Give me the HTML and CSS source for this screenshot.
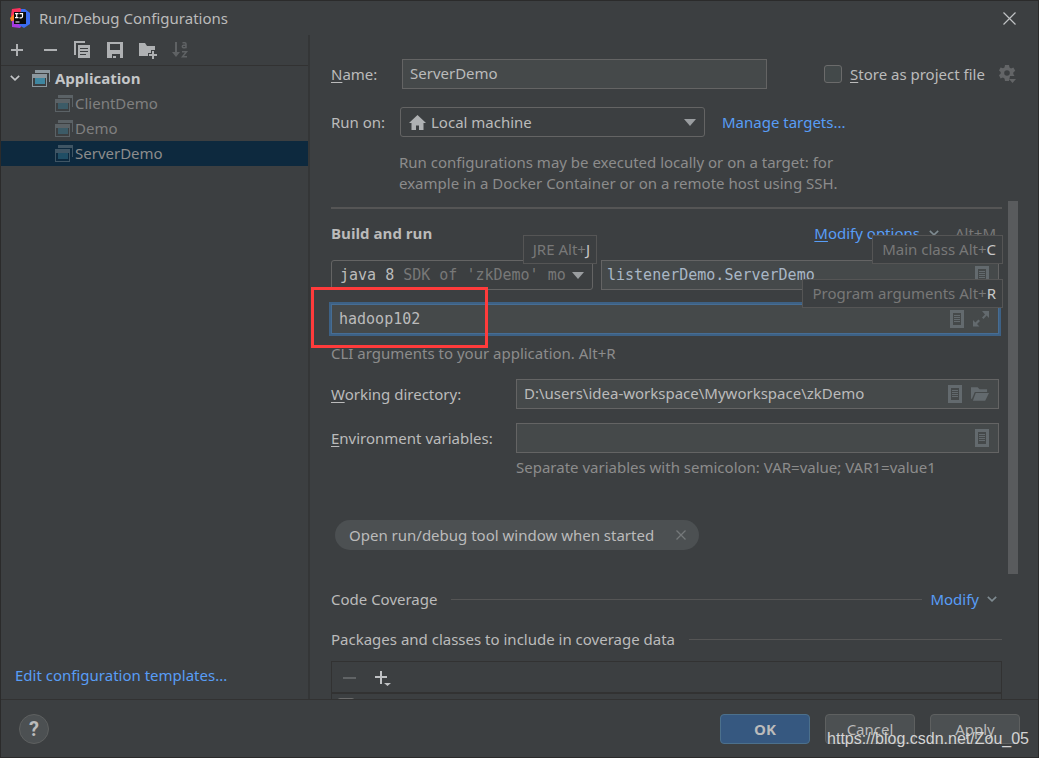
FILE: index.html
```html
<!DOCTYPE html>
<html lang="en">
<head>
<meta charset="utf-8">
<title>Run/Debug Configurations</title>
<link rel="stylesheet" href="styles.css">
</head>
<body>
<svg class="sprite" aria-hidden="true">
  <symbol id="app" viewBox="0 0 18 17">
    <path fill="#8b979e" d="M3 0h15v12h-1V3H3z"/>
    <path fill="#8b979e" fill-rule="evenodd" d="M0 4h15v13H0zM1 8v8h13V8z"/>
    <path fill="#3e86a0" d="M3 8h10v6H3z"/>
  </symbol>
  <symbol id="doc" viewBox="0 0 14 18">
    <path fill="currentColor" fill-rule="evenodd" d="M0 0h14v18H0zM3 3v12h8V3z"/>
    <path fill="currentColor" d="M4 5h6v1H4zM4 7h6v1H4zM4 9h6v1H4zM4 11h6v1H4z"/>
  </symbol>
  <symbol id="chev" viewBox="0 0 10 6">
    <path fill="none" stroke="currentColor" stroke-width="1.6" d="M.8.8 5 4.8 9.2.8"/>
  </symbol>
  <symbol id="tri" viewBox="0 0 12 7"><path fill="currentColor" d="M0 0h12L6 7z"/></symbol>
</svg>

<div class="dialog">
  <header class="titlebar">
    <svg class="logo" viewBox="0 0 20 20" aria-hidden="true">
      <path fill="#fc315d" d="M2 1 10 0l4 4-4 8-8 1-1-6z"/>
      <path fill="#fd8224" d="M0 10 4 6v8l-3-1z"/>
      <path fill="#a73ae0" d="M2 13l4-1 6 5-2 3-8-1z"/>
      <path fill="#3b6cf0" d="M11 1l4 0 5 4v11l-6 4-5-3z"/>
      <path fill="#0a0a0a" d="M4 4h12v12H4z"/>
      <path fill="none" stroke="#fff" stroke-width="1.2" d="M5 5.6h3.500M6.700 5.600v4M5 9.600h3.500M9.500 5.600h3v3q0 1.200-1.300 1.200H9.500"/>
      <path fill="#fff" d="M5.500 13.500h4v1h-4z"/>
    </svg>
    <h1 class="title">Run/Debug Configurations</h1>
    <button class="icon-btn close" aria-label="Close">
      <svg width="13" height="13" viewBox="0 0 13 13"><path fill="none" stroke="#c0c2c4" stroke-width="1.200" d="M.5.5l12 12M12.500.5l-12 12"/></svg>
    </button>
  </header>

  <div class="body">
    <aside class="sidebar">
      <div class="toolbar">
        <button class="icon-btn" aria-label="Add"><svg width="18" height="18" viewBox="0 0 18 18"><path fill="#afb1b3" d="M9 3h2v5h5v2h-5v5H9v-5H4V8h5z"/></svg></button>
        <button class="icon-btn" aria-label="Remove"><svg width="18" height="18" viewBox="0 0 18 18"><path fill="#afb1b3" d="M4 8h13v2H4z"/></svg></button>
        <button class="icon-btn" aria-label="Copy"><svg width="18" height="18" viewBox="0 0 18 18"><path fill="#afb1b3" d="M1 0h11v2H3v12H1z"/><path fill="#afb1b3" fill-rule="evenodd" d="M5 4h12v13H5zM7 7v1h8V7zM7 10v1h8v-1zM7 13v1h6v-1z"/></svg></button>
        <button class="icon-btn" aria-label="Save"><svg width="18" height="18" viewBox="0 0 18 18"><path fill="#afb1b3" fill-rule="evenodd" d="M1 1h16v16h-3v-4H6v4H1zM4 3v6h10V3z"/><path fill="#afb1b3" d="M7 15h3v2H7z"/></svg></button>
        <button class="icon-btn" aria-label="New folder"><svg width="18" height="18" viewBox="0 0 18 18"><path fill="#afb1b3" d="M0 2h6l2 3h8v4h-4v3H9v3H0z"/><path fill="#afb1b3" d="M13 10h2v3h3v2h-3v3h-2v-3h-3v-2h3z"/></svg></button>
        <button class="icon-btn" aria-label="Sort" disabled><svg width="18" height="18" viewBox="0 0 18 18"><path fill="#5f6264" d="M3 1h2v10h3l-4 5-4-5h3z"/><path fill="none" stroke="#5f6264" stroke-width="1.500" d="M10.500 1.700h2.300q1.200 0 1.200 1.200v4.400M14 4.200h-2.500q-1.200 0-1.200 1.200t1.200 1.300h1.500l1-1M10 10.700h4.500l-4 5H15"/></svg></button>
      </div>
      <ul class="tree">
        <li class="node root"><svg class="twisty"><use href="#chev"/></svg><svg class="app-ico"><use href="#app"/></svg>Application</li>
        <li class="node leaf"><svg class="app-ico"><use href="#app"/></svg>ClientDemo</li>
        <li class="node leaf"><svg class="app-ico"><use href="#app"/></svg>Demo</li>
        <li class="node leaf selected"><svg class="app-ico"><use href="#app"/></svg>ServerDemo</li>
      </ul>
      <a class="link templates" href="#templates">Edit configuration templates...</a>
    </aside>

    <main class="main">
      <section class="head">
        <div class="row name-row">
          <label class="label" for="name"><u>N</u>ame:</label>
          <input class="field name-field" id="name" type="text" value="ServerDemo">
          <div class="store">
            <input class="check" type="checkbox" id="store">
            <label for="store"><u>S</u>tore as project file</label>
            <button class="icon-btn" aria-label="Storage settings"><svg width="17" height="18" viewBox="0 0 17 18"><path fill="#636567" fill-rule="evenodd" d="M6 0h4l.5 2.500 1.500.9 2.400-.9 1.800 3.200-1.900 1.700v1.700L15.500 11H11l-1 5H6l-.5-2.500-1.600-.9-2.300.9L0 10.200l1.700-1.600V7L0 5.600l1.600-3.200 2.400.9 1.500-.9zM8 5.200a2.800 2.800 0 1 0 0 5.600 2.800 2.800 0 0 0 0-5.600z"/><path fill="#636567" d="M10 14h7l-3.500 4z"/></svg></button>
          </div>
        </div>
        <div class="row target-row">
          <label class="label" for="target">Run on:</label>
          <div class="combo target-combo">
            <svg class="home" viewBox="0 0 17 15"><path fill="#afb1b3" d="M8.500 0 17 8h-2.500v7H10v-4.500H7V15H2.500V8H0z"/></svg>
            <select id="target"><option>Local machine</option></select>
            <svg class="tri"><use href="#tri"/></svg>
          </div>
          <a class="link" href="#targets">Manage targets...</a>
        </div>
        <p class="hint target-hint">Run configurations may be executed locally or on a target: for<br>example in a Docker Container or on a remote host using SSH.</p>
      </section>

      <div class="scroller">
        <div class="form">
          <div class="build-head">
            <h2 class="section-title">Build and run</h2>
            <a class="link modify-options" href="#options"><u>M</u>odify options</a>
            <svg class="chev"><use href="#chev"/></svg>
            <span class="shortcut">Alt+M</span>
          </div>
          <div class="build-row">
            <div class="combo jre mono">
              <label for="jre">java 8</label>
              <select id="jre"><option>SDK of 'zkDemo' mo</option></select>
              <svg class="tri"><use href="#tri"/></svg>
              <span class="tip">JRE Alt+<b>J</b></span>
            </div>
            <div class="field main-class mono">
              <input type="text" aria-label="Main class" value="listenerDemo.ServerDemo">
              <button class="icon-btn dim" aria-label="Browse classes"><svg class="doc"><use href="#doc"/></svg></button>
              <span class="tip">Main class Alt+<b>C</b></span>
            </div>
          </div>
          <div class="field args mono">
            <input type="text" aria-label="Program arguments" value="hadoop102">
            <button class="icon-btn dim" aria-label="Insert macro"><svg class="doc"><use href="#doc"/></svg></button>
            <button class="icon-btn dim" aria-label="Expand"><svg width="16" height="16" viewBox="0 0 16 16"><path fill="currentColor" d="M9 0h7v7l-2.400-2.400L10.500 8 9 6.500l3-3zM0 9l2.400 2.400L5.500 8.500 7 10l-3 3 2.500 2.500H0z"/></svg></button>
            <span class="tip">Program arguments Alt+<b>R</b></span>
            <span class="marker"></span>
          </div>
          <p class="hint args-hint">CLI arguments to your application. Alt+R</p>

          <div class="grid">
            <label for="wd"><u>W</u>orking directory:</label>
            <div class="field">
              <input id="wd" type="text" value="D:\users\idea-workspace\Myworkspace\zkDemo">
              <button class="icon-btn dim" aria-label="Insert macro"><svg class="doc"><use href="#doc"/></svg></button>
              <button class="icon-btn dim" aria-label="Browse"><svg width="18" height="14" viewBox="0 0 19 14"><path fill="currentColor" d="M0 0h7l2 2h8v3H4L1 12H0z"/><path fill="currentColor" d="M5 6h14l-4 8H2z"/></svg></button>
            </div>
            <label for="env"><u>E</u>nvironment variables:</label>
            <div class="field">
              <input id="env" type="text">
              <button class="icon-btn dim" aria-label="Edit variables"><svg class="doc"><use href="#doc"/></svg></button>
            </div>
          </div>
          <p class="hint env-hint">Separate variables with semicolon: VAR=value; VAR1=value1</p>

          <div class="chip">Open run/debug tool window when started
            <button class="icon-btn" aria-label="Remove option"><svg width="10" height="10" viewBox="0 0 10 10"><path stroke="#75787a" stroke-width="1.300" d="M.5.5l9 9M9.500.5l-9 9"/></svg></button>
          </div>

          <div class="divider coverage"><span>Code Coverage</span><i class="rule"></i><a class="link" href="#modify">Modify</a><svg class="chev"><use href="#chev"/></svg></div>
          <div class="divider packages"><span>Packages and classes to include in coverage data</span><i class="rule"></i></div>
          <div class="table-box">
            <div class="table-tools">
              <button class="icon-btn" aria-label="Remove package" disabled><svg width="14" height="18" viewBox="0 0 14 18"><path fill="#606365" d="M0 9h13v2H0z"/></svg></button>
              <button class="icon-btn" aria-label="Add package"><svg width="18" height="18" viewBox="0 0 18 18"><path fill="#c0c2c4" d="M6 3h2v5h5v2H8v6H6v-6H1V8h5zM10 15h7l-3.500 3z"/></svg></button>
            </div>
            <div class="table-row"><input class="check" type="checkbox" aria-label="Include package"></div>
          </div>
        </div>
        <div class="scrollbar"><div class="thumb"></div></div>
      </div>
    </main>
  </div>

  <footer class="footer">
    <button class="help" aria-label="Help">?</button>
    <button class="btn primary">OK</button>
    <button class="btn">Cancel</button>
    <button class="btn">Apply</button>
    <span class="watermark">https://blog.csdn.net/Zou_05</span>
  </footer>
</div>
</body>
</html>
```
FILE: styles.css
```css
* { box-sizing: border-box; }
body {
  margin: 0;
  background: #3c3f41;
  color: #bbbbbb;
  font: 15px/20px "Noto Sans", "Open Sans", sans-serif;
}
h1, h2, p, ul { margin: 0; padding: 0; }
button, input, select { font: inherit; color: inherit; }
u { text-decoration: underline; text-underline-offset: 2px; }
svg { display: block; flex: none; }
.sprite { display: none; }

.dialog {
  display: flex;
  flex-direction: column;
  height: 100vh;
  border: 1px solid #2b2b2b;
  overflow: hidden;
}
.icon-btn {
  display: flex;
  flex: none;
  padding: 0;
  border: 0;
  background: none;
}
.dim { color: #636a6e; }
.link { color: #589df6; text-decoration: none; white-space: nowrap; }
.hint { color: #8c8c8c; }
.mono { font-family: "DejaVu Sans Mono", monospace; }

.titlebar {
  display: flex;
  align-items: center;
  height: 34px;
  padding: 0 22px 0 9px;
}
.logo { width: 20px; height: 20px; }
.title { margin-left: 9px; font-size: 15px; font-weight: 400; }
.close { margin-left: auto; }

.body { display: flex; flex: 1; min-height: 0; }
.sidebar {
  display: flex;
  flex-direction: column;
  flex: 0 0 309px;
  border-right: 2px solid #343637;
}
.toolbar {
  display: flex;
  align-items: center;
  gap: 15px;
  height: 31px;
  padding-left: 6px;
  border-bottom: 1px solid #323232;
}
.tree { list-style: none; }
.node { display: flex; align-items: center; height: 25px; padding-bottom: 1px; }
.root { padding-left: 9px; color: #c4c6c8; font-family: "Open Sans", sans-serif; font-weight: 700; }
.leaf { padding-left: 54px; color: #808080; }
.selected { background: #0d293e; color: #8c8c8c; }
.twisty { width: 10px; height: 6px; margin-right: 12px; }
.app-ico { width: 18px; height: 17px; }
.root .app-ico { margin-right: 5px; }
.leaf .app-ico { margin-right: 2px; opacity: .4; }
.templates { margin: auto auto 14px 14px; }

.main { display: flex; flex-direction: column; flex: 1; min-width: 0; }
.head { padding: 24px 22px 7px 21px; }
.row { display: flex; align-items: center; }
.label { flex: none; width: 69px; }
.name-row .label { width: 71px; }
.field {
  position: relative;
  display: flex;
  align-items: center;
  gap: 9px;
  height: 30px;
  padding: 0 9px 0 7px;
  border: 1px solid #646464;
  background: #45494a;
}
.field input {
  flex: 1;
  min-width: 0;
  padding: 0;
  border: 0;
  outline: 0;
  background: none;
}
.name-field { flex: 1; min-width: 0; padding-bottom: 2px; outline: 0; }
.grid .field input { padding-bottom: 2px; }
.store {
  display: flex;
  flex: 0 0 192px;
  align-items: center;
  margin-left: 57px;
  white-space: nowrap;
}
.store label { flex: 1; margin-left: 8px; }
.check {
  appearance: none;
  width: 18px;
  height: 18px;
  margin: 0;
  border: 1px solid #6b6b6b;
  border-radius: 3px;
  background: #43494a;
}
.combo {
  position: relative;
  display: flex;
  align-items: center;
  height: 30px;
  padding: 0 8px;
  border: 1px solid #646464;
  border-radius: 3px;
}
.combo select {
  appearance: none;
  flex: 1;
  min-width: 0;
  padding: 0;
  border: 0;
  outline: 0;
  background: none;
}
.tri { width: 12px; height: 7px; color: #9a9da0; }
.doc { width: 14px; height: 18px; }
.home { width: 17px; height: 15px; margin-right: 5px; }
.target-row { margin-top: 18px; }
.target-combo { flex: 0 0 305px; margin-right: 17px; }
.target-hint { margin: 15px 0 0 68px; line-height: 21px; }

.scroller { display: flex; flex: 1; min-height: 0; overflow: hidden; }
.form { flex: 1; min-width: 0; margin: 6px 6px 0 21px; border-top: 2px solid #555555; height: max-content; }
.scrollbar { width: 30px; }
.thumb { width: 10px; height: 373px; background: #595b5d; }

.build-head { display: flex; align-items: center; padding: 14px 6px 0 0; }
.section-title { margin-right: auto; font: 700 15px/20px "Open Sans", sans-serif; }
.chev { width: 10px; height: 6px; margin-left: 5px; color: #7f8b91; }
.modify-options { margin-right: 4px; }
.shortcut { margin-left: 16px; color: #787878; }
.build-row { display: flex; gap: 8px; margin: 17px 3px 0 0; }
.jre { flex: 0 0 262px; }
.jre label { margin-right: 9px; }
.jre select { color: #787878; }
.main-class { flex: 1; min-width: 0; padding-left: 5px; color: #a9b7c6; }
.tip {
  position: absolute;
  z-index: 1;
  top: -26px;
  right: -5px;
  height: 29px;
  padding: 0 6px 0 9px;
  border: 1px solid #555555;
  background: #3c3f41;
  color: #787878;
  font: 15px/27px "Noto Sans", "Open Sans", sans-serif;
  white-space: nowrap;
}
.tip b { color: #c8c8c8; font-weight: 400; }
.args {
  margin: 14px 3px 0 0;
  border-color: #466d94;
  box-shadow: 0 0 0 2px #3d6185;
}
.marker {
  position: absolute;
  z-index: 2;
  top: -18px;
  left: -21px;
  width: 177px;
  height: 61px;
  border: 3px solid #ff3b3b;
  pointer-events: none;
}
.args-hint { margin-top: 9px; }
.grid {
  display: grid;
  grid-template-columns: 185px 1fr;
  row-gap: 14px;
  align-items: center;
  margin: 16px 3px 0 0;
}
.env-hint { margin: 4px 0 0 185px; }
.chip {
  display: flex;
  align-items: center;
  gap: 22px;
  width: max-content;
  height: 30px;
  margin: 43px 0 0 4px;
  padding: 0 13px 0 14px;
  border-radius: 15px;
  background: #4c5052;
}
.divider { display: flex; align-items: center; white-space: nowrap; }
.rule { flex: 1; height: 1px; margin-left: 14px; background: #555555; }
.coverage { margin-top: 39px; padding-right: 5px; }
.coverage .link { margin: 0 3px 0 8px; }
.packages { margin-top: 20px; }
.table-box { margin-top: 12px; border: 1px solid #323232; }
.table-tools {
  display: flex;
  align-items: center;
  gap: 17px;
  height: 32px;
  padding-left: 11px;
  border-bottom: 2px solid #323232;
}
.table-row { height: 26px; padding: 4px 5px; }

.footer {
  position: relative;
  display: flex;
  gap: 15px;
  height: 58px;
  padding: 14px 18px;
  border-top: 1px solid #323232;
}
.help {
  width: 30px;
  height: 30px;
  margin-right: auto;
  padding: 0;
  border: 1px solid #5e6060;
  border-radius: 50%;
  background: #4c5052;
  font: 700 20px/26px Roboto, sans-serif;
}
.btn {
  width: 90px;
  height: 30px;
  padding: 0;
  border: 1px solid #5e6060;
  border-radius: 4px;
  background: #4c5052;
}
.primary { border-color: #4c708c; background: #365880; font-family: "Open Sans", sans-serif; font-weight: 700; }
.watermark {
  position: absolute;
  right: 9px;
  bottom: 8px;
  color: #d4d4d4;
  font: 16px/20px "Liberation Sans", Arial, sans-serif;
}
```
